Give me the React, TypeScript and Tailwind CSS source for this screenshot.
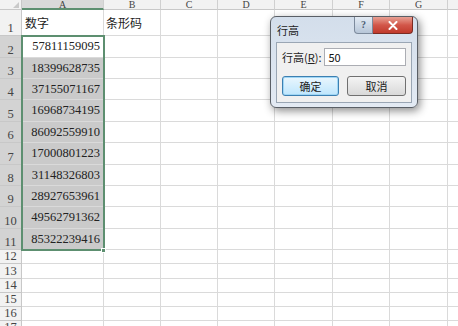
import React from "react";

// column widths: A..G, rest
const colWidths = [82, 57, 57, 57, 58, 57, 58, 12];
const colNames = ["A", "B", "C", "D", "E", "F", "G", ""];

const values = [
    "57811159095",
    "18399628735",
    "37155071167",
    "16968734195",
    "86092559910",
    "17000801223",
    "31148326803",
    "28927653961",
    "49562791362",
    "85322239416",
];

// row heights in px, rows 1..17
const rowHeights = [26, 22, 21, 21, 22, 21, 22, 21, 21, 22, 21, 14, 15, 14, 14, 14, 14];

const serif = { fontFamily: '"Liberation Serif", "Noto Sans CJK SC", serif' };
const cjk = { fontFamily: '"Noto Sans CJK SC", "Liberation Sans", sans-serif' };

function HeaderRow() {
    return (
        <div className="flex h-[10px]">
            <div className="w-[22px] shrink-0 border-r border-b border-[#c8c8c8] bg-[#f2f2f2] relative">
                <div className="absolute right-[2px] bottom-[1px] w-0 h-0 border-l-[6px] border-l-transparent border-b-[6px] border-b-[#c9c9c9]" />
            </div>
            {colWidths.map((w, i) => (
                <div
                    key={i}
                    style={{ width: w, ...serif }}
                    className={`shrink-0 border-r border-[#d0d0d0] flex items-center justify-center text-[10px] leading-[9px] text-[#444] ${
                        i === 0 ? "bg-[#d9d9d9] border-b-2 border-b-[#5d8f70]" : "bg-[#f2f2f2] border-b border-b-[#c8c8c8]"
                    }`}
                >
                    {colNames[i]}
                </div>
            ))}
        </div>
    );
}

function Row({ n, h }: { n: number; h: number }) {
    const selected = n >= 2 && n <= 11;
    const active = n === 2;
    let a: React.ReactNode = null;
    let b: React.ReactNode = null;
    if (n === 1) {
        a = <span style={cjk} className="text-[12px] pl-[3px]">数字</span>;
        b = <span style={cjk} className="text-[12px] pl-[2px]">条形码</span>;
    } else if (selected) {
        a = <span style={serif} className="text-[12.5px] pr-[3px] w-full text-right">{values[n - 2]}</span>;
    }
    return (
        <div className="flex" style={{ height: h }}>
            <div
                style={serif}
                className={`w-[22px] shrink-0 border-r border-b border-[#c8c8c8] flex items-end justify-center pb-[1px] text-[12.5px] leading-none text-[#444] ${
                    selected ? "bg-[#d3d3d3]" : "bg-[#f2f2f2]"
                }`}
            >
                {n}
            </div>
            {colWidths.map((w, i) => (
                <div
                    key={i}
                    style={{ width: w }}
                    className={`shrink-0 border-r border-b border-[#dadada] flex items-center text-[#222] whitespace-nowrap ${
                        i === 0 && selected && !active ? "bg-[#cacaca]" : "bg-white"
                    }`}
                >
                    {i === 0 ? a : i === 1 ? b : null}
                </div>
            ))}
        </div>
    );
}

function RowHeightDialog() {
    return (
        <div className="absolute left-[270px] top-[16px] w-[148px] h-[92px] rounded-[6px] border border-[#5a5f66] bg-gradient-to-b from-[#d3deeb] to-[#e3eaf3] shadow-[2px_3px_8px_rgba(0,0,0,0.45)]">
            <div className="flex h-[25px] items-start">
                <div style={cjk} className="pl-[6px] pt-[8px] text-[11px] leading-none text-[#222]">行高</div>
                <div className="ml-auto flex mr-[4px]">
                    <div className="w-[19px] h-[17px] rounded-bl-[4px] border border-[#7c8a9c] border-t-0 bg-gradient-to-b from-[#e3ebf4] to-[#b7c6d8] flex items-center justify-center text-[10px] leading-none text-[#4b5b70] font-bold" style={serif}>
                        ?
                    </div>
                    <div className="w-[40px] h-[17px] rounded-br-[4px] border border-[#7a2b22] border-t-0 border-l-0 bg-gradient-to-b from-[#e7a094] via-[#d2574a] to-[#c0392b] flex items-center justify-center">
                        <svg width="10" height="9" viewBox="0 0 10 9">
                            <path d="M1.5 1 L8.5 8 M8.5 1 L1.5 8" stroke="#fff" strokeWidth="2" strokeLinecap="round" />
                        </svg>
                    </div>
                </div>
            </div>
            <div className="mx-[5px] h-[61px] border border-[#9aa6b4] bg-[#f0f0f0] px-[5px] pt-[5px]">
                <div className="flex items-center gap-[2px]">
                    <span style={cjk} className="text-[11px] leading-none text-[#222] whitespace-nowrap">
                        行高(<span className="underline">R</span>):
                    </span>
                    <div className="ml-auto w-[86px] h-[18px] border border-[#abadb3] bg-white flex items-center pl-[4px] text-[11px] text-[#111]" style={cjk}>
                        50
                    </div>
                </div>
                <div className="flex justify-between mt-[10px]">
                    <div style={cjk} className="w-[57px] h-[20px] rounded-[3px] border border-[#3c7fb1] bg-gradient-to-b from-[#eaf6fd] to-[#bee6fd] shadow-[inset_0_0_0_1px_#9fd6f5] flex items-center justify-center text-[11px] leading-none text-[#222]">
                        确定
                    </div>
                    <div style={cjk} className="w-[59px] h-[20px] rounded-[3px] border border-[#707070] bg-gradient-to-b from-[#f4f4f4] to-[#d9d9d9] flex items-center justify-center text-[11px] leading-none text-[#222]">
                        取消
                    </div>
                </div>
            </div>
        </div>
    );
}

export default function App() {
    return (
        <div className="relative w-[458px] h-[326px] overflow-hidden bg-white">
            <HeaderRow />
            {rowHeights.map((h, i) => (
                <Row key={i} n={i + 1} h={h} />
            ))}
            {/* selection outline A2:A11 */}
            <div className="absolute left-[21px] top-[35px] w-[84px] h-[216px] border-2 border-[#5d8f70] pointer-events-none" />
            <div className="absolute left-[101px] top-[248px] w-[5px] h-[5px] bg-[#5d8f70] border border-white" />
            <RowHeightDialog />
        </div>
    );
}
